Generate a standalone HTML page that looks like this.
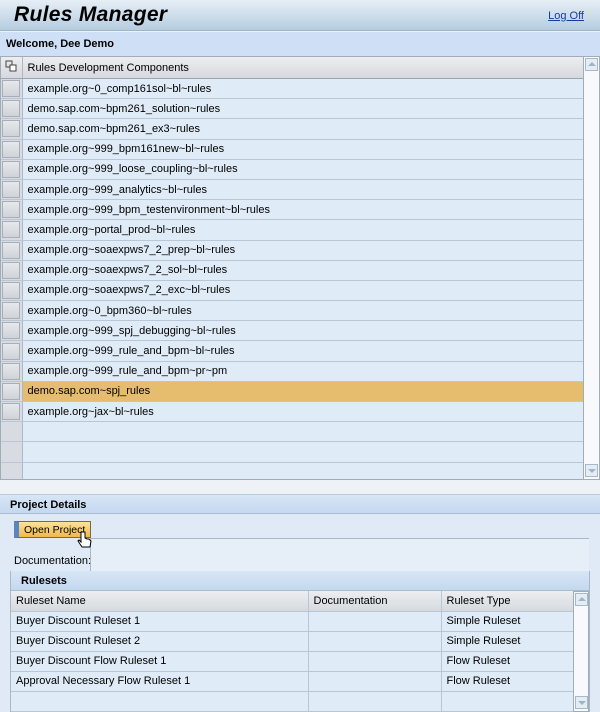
<!DOCTYPE html>
<html><head><style>
*{box-sizing:border-box;margin:0;padding:0}
body{width:600px;height:712px;overflow:hidden;background:#eef2f7;font-family:"Liberation Sans",Arial,sans-serif;font-size:11px;color:#000;position:relative}
.abs{position:absolute}
.hdr{left:0;top:0;width:600px;height:31px;background:linear-gradient(#e6eef6,#b6cde0);border-bottom:1px solid #9db3c8}
.title{left:14px;top:3px;font-size:21px;font-weight:bold;font-style:italic;letter-spacing:0.3px}
.logoff{right:16px;top:10px;color:#1a3c9c;text-decoration:underline;font-size:11px}
.wel{left:0;top:32px;width:600px;height:24px;background:#cfe0f6;font-weight:bold;padding:6px 0 0 6px}
table{border-collapse:collapse}
.grid td{height:20.2px;border-bottom:1px solid #b9c6d6;background:#dfebf7;padding-left:5px;white-space:nowrap}
.grid td.sel{width:21px;padding:0;background:#d8dce2;border-right:1px solid #b0b8c4}
.grid td.sel div{width:18px;height:17px;margin:1px;background:linear-gradient(#e6e8eb,#cfd3d8);border:1px solid #a8afb8}
.grid tr.h td{background:linear-gradient(#eceef0,#d6d9de);border-bottom:1px solid #9aa6b4}
.grid tr.hl td{background:#e6bd6e}
.sb{background:#f8f9fc;border-left:1px solid #b0bcc8}
.arr{width:13px;height:13px;border:1px solid #a8b8c8;background:#e4ecf4;position:absolute;left:1px}
.arr:after{content:"";position:absolute;left:2px;border-left:4px solid transparent;border-right:4px solid transparent}
.up:after{top:3px;border-bottom:4px solid #9fb4c8}
.dn:after{top:4px;border-top:4px solid #9fb4c8}
.rs td{height:20px;border-bottom:1px solid #b9c6d6;border-right:1px solid #b9c6d6;background:#dfebf7;padding-left:5px;white-space:nowrap}
.rs tr.h td{background:linear-gradient(#eceef0,#d6d9de)}
</style></head><body>
<div class="abs hdr"></div>
<div class="abs title">Rules Manager</div>
<div class="abs logoff">Log Off</div>
<div class="abs wel">Welcome, Dee Demo</div>
<div class="abs" style="left:0;top:56px;width:584px;height:424px;border:1px solid #a0acb8;border-right:none;background:#dfebf7;overflow:hidden">
<table class="grid" style="width:583px">
<tr class="h"><td class="sel" style="background:linear-gradient(#eceef0,#d6d9de)"><svg width="20" height="18"><rect x="5" y="4" width="6" height="6" fill="none" stroke="#444"/><rect x="9" y="8" width="6" height="6" fill="#fff" stroke="#444"/></svg></td><td>Rules Development Components</td></tr>
<tr><td class="sel"><div></div></td><td>example.org~0_comp161sol~bl~rules</td></tr>
<tr><td class="sel"><div></div></td><td>demo.sap.com~bpm261_solution~rules</td></tr>
<tr><td class="sel"><div></div></td><td>demo.sap.com~bpm261_ex3~rules</td></tr>
<tr><td class="sel"><div></div></td><td>example.org~999_bpm161new~bl~rules</td></tr>
<tr><td class="sel"><div></div></td><td>example.org~999_loose_coupling~bl~rules</td></tr>
<tr><td class="sel"><div></div></td><td>example.org~999_analytics~bl~rules</td></tr>
<tr><td class="sel"><div></div></td><td>example.org~999_bpm_testenvironment~bl~rules</td></tr>
<tr><td class="sel"><div></div></td><td>example.org~portal_prod~bl~rules</td></tr>
<tr><td class="sel"><div></div></td><td>example.org~soaexpws7_2_prep~bl~rules</td></tr>
<tr><td class="sel"><div></div></td><td>example.org~soaexpws7_2_sol~bl~rules</td></tr>
<tr><td class="sel"><div></div></td><td>example.org~soaexpws7_2_exc~bl~rules</td></tr>
<tr><td class="sel"><div></div></td><td>example.org~0_bpm360~bl~rules</td></tr>
<tr><td class="sel"><div></div></td><td>example.org~999_spj_debugging~bl~rules</td></tr>
<tr><td class="sel"><div></div></td><td>example.org~999_rule_and_bpm~bl~rules</td></tr>
<tr><td class="sel"><div></div></td><td>example.org~999_rule_and_bpm~pr~pm</td></tr>
<tr class="hl"><td class="sel" style="background:#d8dce2"><div></div></td><td>demo.sap.com~spj_rules</td></tr>
<tr><td class="sel"><div></div></td><td>example.org~jax~bl~rules</td></tr>
<tr><td class="sel"></td><td></td></tr>
<tr><td class="sel"></td><td></td></tr>
<tr><td class="sel"></td><td></td></tr>
</table></div>
<div class="abs sb" style="left:583px;top:56px;width:17px;height:424px;border:1px solid #a0acb8">
<div class="arr up" style="top:1px"></div><div class="arr dn" style="top:407px"></div></div>
<div class="abs" style="left:0;top:494px;width:600px;height:20px;background:linear-gradient(#d8e6f6,#c4d8ee);border-top:1px solid #b8cce0;border-bottom:1px solid #a8bcd4;font-weight:bold;padding:4px 0 0 10px">Project Details</div>
<div class="abs" style="left:0;top:514px;width:600px;height:198px;background:#dfeaf6"></div>
<div class="abs" style="left:90px;top:538px;width:499px;height:34px;border-top:1px solid #a8b8c8;border-left:1px solid #a8b8c8;background:#e6eef8"></div>
<div class="abs" style="left:14px;top:521px;width:77px;height:17px;background:linear-gradient(#fbe39a,#f1b84a);border:1px solid #7a6a40;border-left:5px solid #5a84c8;padding:2px 0 0 5px;white-space:nowrap;font-size:10.5px">Open Project</div>
<svg class="abs" style="left:77px;top:530px" width="16" height="20"><path d="M4 2v10l-2-2-1 1 4 6h8l1-6-2-2-2 0-2-1V2z" fill="#fff" stroke="#000"/></svg>
<div class="abs" style="left:14px;top:555px">Documentation:</div>
<div class="abs" style="left:10px;top:571px;width:580px;height:141px;border:1px solid #a8b8c8;background:#dfebf7"></div>
<div class="abs" style="left:11px;top:571px;width:578px;height:20px;background:linear-gradient(#d8e6f6,#c4d8ee);border-bottom:1px solid #a8bcd4;font-weight:bold;padding:4px 0 0 10px">Rulesets</div>
<table class="abs rs" style="left:11px;top:591px;width:563px">
<tr class="h"><td style="width:297px">Ruleset Name</td><td style="width:133px">Documentation</td><td>Ruleset Type</td></tr>
<tr><td>Buyer Discount Ruleset 1</td><td></td><td>Simple Ruleset</td></tr>
<tr><td>Buyer Discount Ruleset 2</td><td></td><td>Simple Ruleset</td></tr>
<tr><td>Buyer Discount Flow Ruleset 1</td><td></td><td>Flow Ruleset</td></tr>
<tr><td>Approval Necessary Flow Ruleset 1</td><td></td><td>Flow Ruleset</td></tr>
<tr><td></td><td></td><td></td></tr>
</table>
<div class="abs sb" style="left:573px;top:591px;width:16px;height:121px;border:1px solid #a0acb8">
<div class="arr up" style="top:1px"></div><div class="arr dn" style="top:104px"></div></div>
</body></html>
